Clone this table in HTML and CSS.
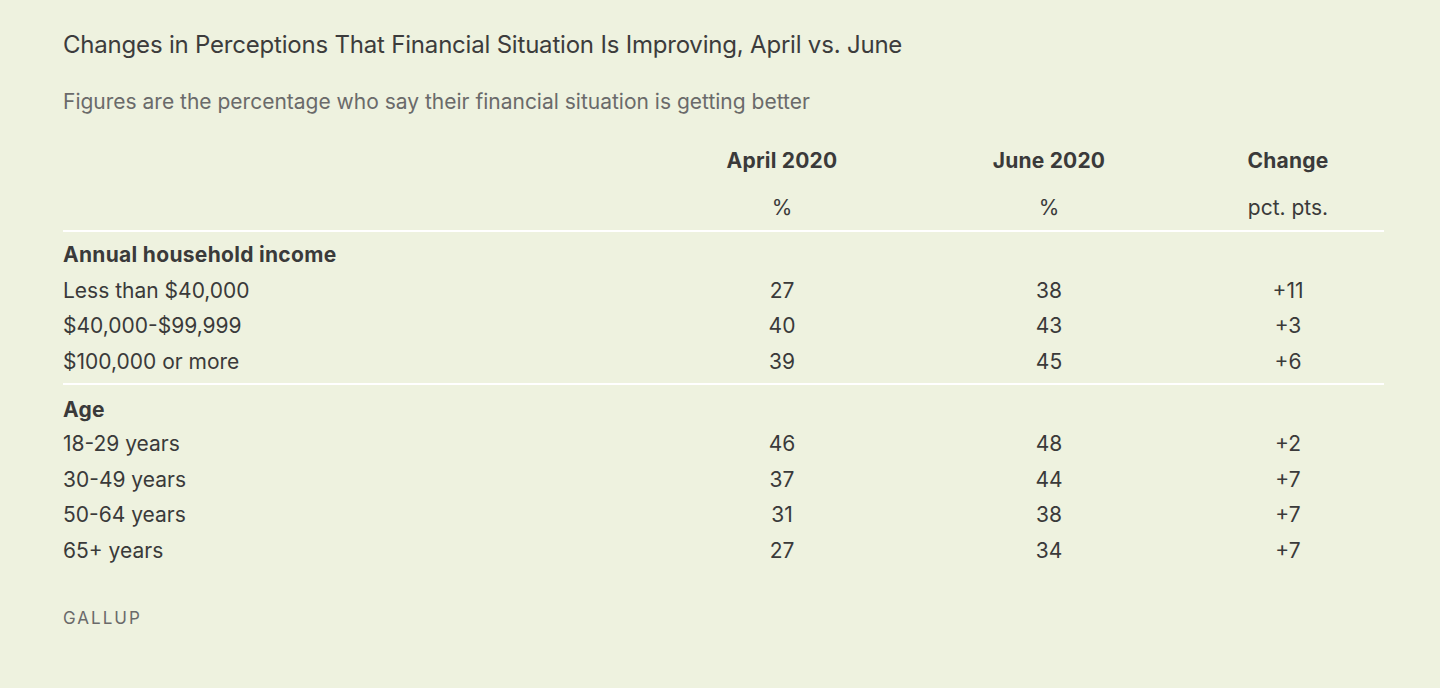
FILE: index.html
```html
<!DOCTYPE html>
<html lang="en">
<head>
<meta charset="utf-8">
<title>Changes in Perceptions</title>
<link rel="stylesheet" href="styles.css">
</head>
<body>
<main class="chart">
  <h1 class="title">Changes in Perceptions That Financial Situation Is Improving, April vs. June</h1>
  <p class="subtitle">Figures are the percentage who say their financial situation is getting better</p>
  <div class="table">
    <div class="row head">
      <div class="label"></div>
      <div class="num">April 2020</div>
      <div class="num">June 2020</div>
      <div class="num">Change</div>
    </div>
    <div class="row units">
      <div class="label"></div>
      <div class="num">%</div>
      <div class="num">%</div>
      <div class="num">pct. pts.</div>
    </div>
    <div class="group">
      <div class="row section"><div class="label">Annual household income</div></div>
      <div class="row"><div class="label">Less than $40,000</div><div class="num">27</div><div class="num">38</div><div class="num">+11</div></div>
      <div class="row"><div class="label">$40,000-$99,999</div><div class="num">40</div><div class="num">43</div><div class="num">+3</div></div>
      <div class="row"><div class="label">$100,000 or more</div><div class="num">39</div><div class="num">45</div><div class="num">+6</div></div>
    </div>
    <div class="group">
      <div class="row section"><div class="label">Age</div></div>
      <div class="row"><div class="label">18-29 years</div><div class="num">46</div><div class="num">48</div><div class="num">+2</div></div>
      <div class="row"><div class="label">30-49 years</div><div class="num">37</div><div class="num">44</div><div class="num">+7</div></div>
      <div class="row"><div class="label">50-64 years</div><div class="num">31</div><div class="num">38</div><div class="num">+7</div></div>
      <div class="row"><div class="label">65+ years</div><div class="num">27</div><div class="num">34</div><div class="num">+7</div></div>
    </div>
  </div>
  <p class="source">GALLUP</p>
</main>
</body>
</html>
```
FILE: styles.css
```css
html, body {
  margin: 0;
  padding: 0;
  background: #eef2df;
}
body {
  font-family: Inter, "Noto Sans", sans-serif;
  color: #3a3a3a;
  height: 688px;
  overflow: hidden;
}
.chart {
  padding: 28px 56px 0 63px;
}
.title {
  margin: 0;
  font-size: 24px;
  font-weight: 400;
  line-height: 34px;
  letter-spacing: -0.2px;
  color: #3c3c3c;
}
.subtitle {
  margin: 26px 0 0;
  font-size: 21px;
  line-height: 28px;
  color: #6a6a6a;
  letter-spacing: 0;
}
.table {
  margin-top: 31px;
}
.row {
  display: grid;
  grid-template-columns: 595px 248px 286px 192px;
  font-size: 21px;
  line-height: 35.5px;
}
.num {
  text-align: center;
}
.head {
  font-weight: 700;
  line-height: 28px;
  letter-spacing: 0.2px;
}
.units {
  margin-top: 19px;
  line-height: 28px;
  padding-bottom: 8px;
}
.group {
  border-top: 2px solid #ffffff;
  padding-top: 5px;
  padding-bottom: 4px;
}
.group + .group {
  padding-top: 8px;
}
.section {
  font-weight: 700;
  letter-spacing: 0.3px;
}
.group + .group .section {
  line-height: 33px;
}
.source {
  margin: 35px 0 0;
  font-size: 17px;
  line-height: 22px;
  letter-spacing: 2px;
  color: #6a6a6a;
}
```
